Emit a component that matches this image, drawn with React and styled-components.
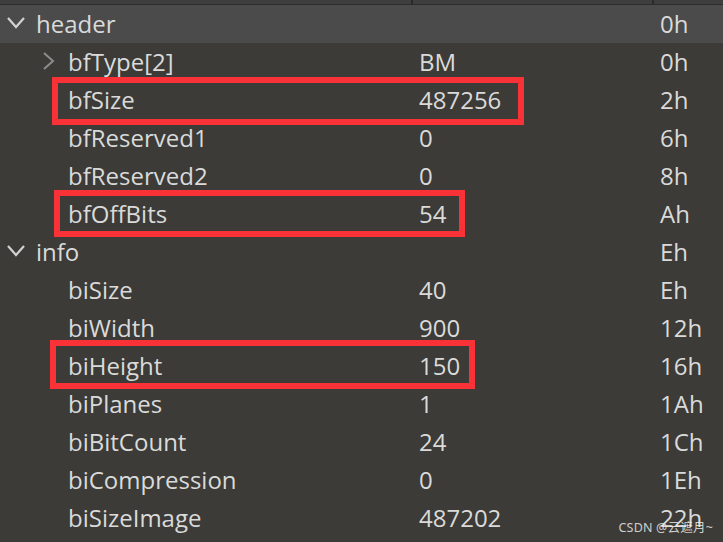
import React from 'react'
import styled, { createGlobalStyle } from 'styled-components'

const GlobalStyle = createGlobalStyle`
html, body {
  margin: 0;
  padding: 0;
  background: #3c3b37;
  overflow: hidden;
}
`

const Page = styled.div`
position: relative;
width: 723px;
height: 542px;
background: #3c3b37;
font-family: "Open Sans", "Noto Sans", sans-serif;
font-size: 24px;
color: #dadada;
overflow: hidden;
`

const TopStrip = styled.div`
display: grid;
grid-template-columns: 413px 241px 1fr;
height: 4px;
background: #3e3e3e;
border-bottom: 1px solid #2c2c2c;
`

const StripCell = styled.div`
border-right: ${p => (p.$last ? 'none' : '2px solid #2a2a2a')};
`

const Row = styled.div`
position: relative;
display: grid;
grid-template-columns: 413px 241px 1fr;
align-items: center;
height: 38px;
padding-bottom: 2px;
box-sizing: border-box;
margin-bottom: 0;
background: ${p => (p.$group ? '#4b4b4b' : 'transparent')};
`

const NameCell = styled.div`
display: flex;
align-items: center;
height: 100%;
padding-left: ${p => (p.$depth === 0 ? 5 : 38)}px;
white-space: nowrap;
`

const Toggle = styled.span`
display: flex;
align-items: center;
justify-content: center;
width: 22px;
margin-right: ${p => (p.$depth === 0 ? 9 : 8)}px;
height: 100%;
`

const ValueCell = styled.div`
padding-left: 6px;
white-space: nowrap;
`

const OffsetCell = styled.div`
padding-left: 6px;
white-space: nowrap;
`

const Highlight = styled.div`
position: absolute;
top: ${p => p.$top}px;
bottom: ${p => p.$bottom}px;
left: ${p => p.$left}px;
width: ${p => p.$width}px;
border: 6px solid #f83236;
box-sizing: border-box;
pointer-events: none;
`

const Watermark = styled.div`
position: absolute;
right: 10px;
bottom: 6px;
font-family: "Noto Sans", "Noto Sans CJK SC", sans-serif;
font-size: 12.5px;
color: rgba(235, 235, 235, 0.85);
letter-spacing: 0.2px;
`

const ChevronDown = () => (
  <svg width="20" height="14" viewBox="0 0 20 14">
    <polyline points="2,2 10,11 18,2" fill="none" stroke="#d2d2d2" strokeWidth="2.2" />
  </svg>
)

const ChevronRight = () => (
  <svg width="14" height="18" viewBox="0 0 14 18">
    <polyline points="2,1 11,9 2,17" fill="none" stroke="#8c8c8c" strokeWidth="2" />
  </svg>
)

const rows = [
  { name: 'header', value: '', offset: '0h', depth: 0, group: true, open: true },
  { name: 'bfType[2]', value: 'BM', offset: '0h', depth: 1, closed: true },
  { name: 'bfSize', value: '487256', offset: '2h', depth: 1, box: { top: -4, bottom: -6, left: 52, width: 472 } },
  { name: 'bfReserved1', value: '0', offset: '6h', depth: 1 },
  { name: 'bfReserved2', value: '0', offset: '8h', depth: 1 },
  { name: 'bfOffBits', value: '54', offset: 'Ah', depth: 1, box: { top: -5, bottom: -4, left: 54, width: 411 } },
  { name: 'info', value: '', offset: 'Eh', depth: 0, open: true },
  { name: 'biSize', value: '40', offset: 'Eh', depth: 1 },
  { name: 'biWidth', value: '900', offset: '12h', depth: 1 },
  { name: 'biHeight', value: '150', offset: '16h', depth: 1, box: { top: -7, bottom: -4, left: 50, width: 425 } },
  { name: 'biPlanes', value: '1', offset: '1Ah', depth: 1 },
  { name: 'biBitCount', value: '24', offset: '1Ch', depth: 1 },
  { name: 'biCompression', value: '0', offset: '1Eh', depth: 1 },
  { name: 'biSizeImage', value: '487202', offset: '22h', depth: 1 },
]

const App = () => {
  return (
    <Page>
      <GlobalStyle />
      <TopStrip>
        <StripCell />
        <StripCell />
        <StripCell $last />
      </TopStrip>
      {rows.map(r => (
        <Row key={r.name} $group={r.group}>
          <NameCell $depth={r.depth}>
            <Toggle $depth={r.depth}>
              {r.open && <ChevronDown />}
              {r.closed && <ChevronRight />}
            </Toggle>
            {r.name}
          </NameCell>
          <ValueCell>{r.value}</ValueCell>
          <OffsetCell>{r.offset}</OffsetCell>
          {r.box && (
            <Highlight $top={r.box.top} $bottom={r.box.bottom} $left={r.box.left} $width={r.box.width} />
          )}
        </Row>
      ))}
      <Watermark>CSDN @云遮月~</Watermark>
    </Page>
  )
}

export default App
